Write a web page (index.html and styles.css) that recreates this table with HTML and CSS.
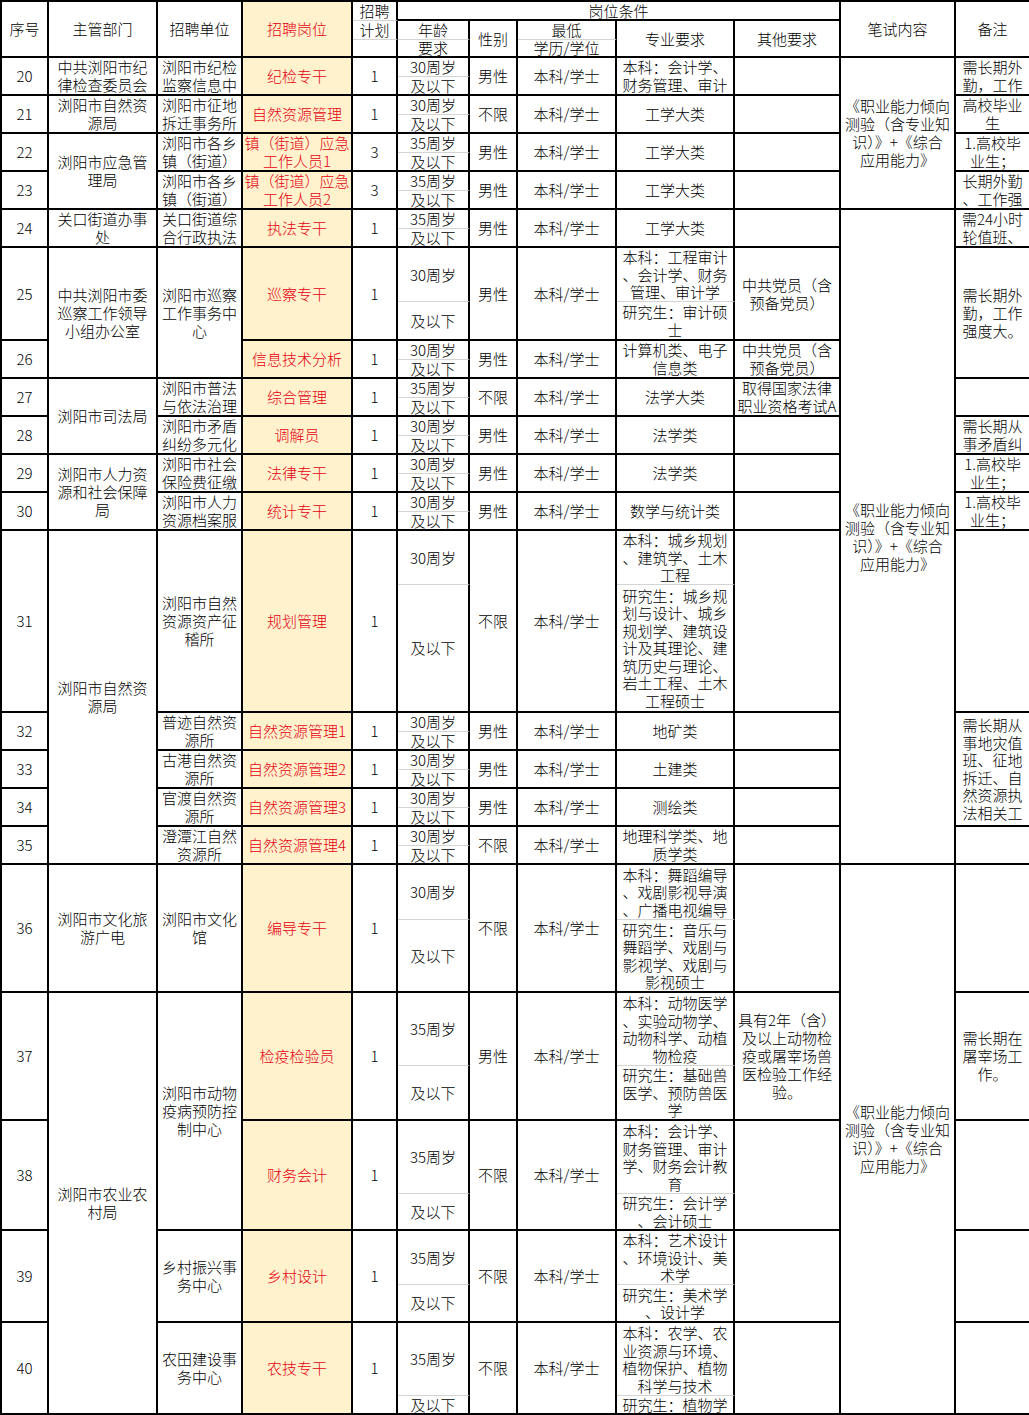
FILE: index.html
```html
<!DOCTYPE html>
<html lang="zh-CN">
<head>
<meta charset="utf-8">
<title>招聘岗位表</title>
<link rel="stylesheet" href="styles.css">
</head>
<body>
<table class="sheet">
<colgroup>
<col class="w-no"><col class="w-dept"><col class="w-unit"><col class="w-post"><col class="w-plan"><col class="w-age"><col class="w-sex"><col class="w-edu"><col class="w-major"><col class="w-other"><col class="w-exam"><col class="w-note">
</colgroup>
<thead>
<tr class="hA">
<th rowspan="3">序号</th>
<th rowspan="3">主管部门</th>
<th rowspan="3">招聘单位</th>
<th rowspan="3" class="post">招聘岗位</th>
<th class="up">招聘</th>
<th colspan="5">岗位条件</th>
<th rowspan="3">笔试内容</th>
<th rowspan="3" class="last">备注</th>
</tr>
<tr class="hB">
<th class="up">计划</th>
<th class="up">年龄</th>
<th rowspan="2">性别</th>
<th class="up">最低</th>
<th rowspan="2">专业要求</th>
<th rowspan="2">其他要求</th>
</tr>
<tr class="hC">
<th></th>
<th>要求</th>
<th>学历/学位</th>
</tr>
</thead>
<tbody>
<!-- 20 -->
<tr class="h19">
<td rowspan="2">20</td>
<td rowspan="2">中共浏阳市纪<br>律检查委员会</td>
<td rowspan="2">浏阳市纪检<br>监察信息中</td>
<td rowspan="2" class="post">纪检专干</td>
<td rowspan="2">1</td>
<td class="age up">30周岁</td>
<td rowspan="2">男性</td>
<td rowspan="2">本科/学士</td>
<td rowspan="2">本科：会计学、<br>财务管理、审计</td>
<td rowspan="2"></td>
<td rowspan="8">《职业能力倾向<br>测验（含专业知<br>识）》+《综合<br>应用能力》</td>
<td rowspan="2" class="last">需长期外<br>勤，工作</td>
</tr>
<tr class="h19"><td class="age">及以下</td></tr>
<!-- 21 -->
<tr class="h19">
<td rowspan="2">21</td>
<td rowspan="2">浏阳市自然资<br>源局</td>
<td rowspan="2">浏阳市征地<br>拆迁事务所</td>
<td rowspan="2" class="post">自然资源管理</td>
<td rowspan="2">1</td>
<td class="age up">30周岁</td>
<td rowspan="2">不限</td>
<td rowspan="2">本科/学士</td>
<td rowspan="2">工学大类</td>
<td rowspan="2"></td>
<td rowspan="2" class="last">高校毕业<br>生</td>
</tr>
<tr class="h19"><td class="age">及以下</td></tr>
<!-- 22 -->
<tr class="h19">
<td rowspan="2">22</td>
<td rowspan="4">浏阳市应急管<br>理局</td>
<td rowspan="2">浏阳市各乡<br>镇（街道）</td>
<td rowspan="2" class="post">镇（街道）应急<br>工作人员1</td>
<td rowspan="2">3</td>
<td class="age up">35周岁</td>
<td rowspan="2">男性</td>
<td rowspan="2">本科/学士</td>
<td rowspan="2">工学大类</td>
<td rowspan="2"></td>
<td rowspan="2" class="last">1.高校毕<br>业生；</td>
</tr>
<tr class="h19"><td class="age">及以下</td></tr>
<!-- 23 -->
<tr class="h19">
<td rowspan="2">23</td>
<td rowspan="2">浏阳市各乡<br>镇（街道）</td>
<td rowspan="2" class="post">镇（街道）应急<br>工作人员2</td>
<td rowspan="2">3</td>
<td class="age up">35周岁</td>
<td rowspan="2">男性</td>
<td rowspan="2">本科/学士</td>
<td rowspan="2">工学大类</td>
<td rowspan="2"></td>
<td rowspan="2" class="last">长期外勤<br>、工作强</td>
</tr>
<tr class="h19"><td class="age">及以下</td></tr>
<!-- 24 -->
<tr class="h19">
<td rowspan="2">24</td>
<td rowspan="2">关口街道办事<br>处</td>
<td rowspan="2">关口街道综<br>合行政执法</td>
<td rowspan="2" class="post">执法专干</td>
<td rowspan="2">1</td>
<td class="age up">35周岁</td>
<td rowspan="2">男性</td>
<td rowspan="2">本科/学士</td>
<td rowspan="2">工学大类</td>
<td rowspan="2"></td>
<td rowspan="24">《职业能力倾向<br>测验（含专业知<br>识）》+《综合<br>应用能力》</td>
<td rowspan="2" class="last">需24小时<br>轮值班、</td>
</tr>
<tr class="h19"><td class="age">及以下</td></tr>
<!-- 25 -->
<tr class="h54">
<td rowspan="2">25</td>
<td rowspan="4">中共浏阳市委<br>巡察工作领导<br>小组办公室</td>
<td rowspan="4">浏阳市巡察<br>工作事务中<br>心</td>
<td rowspan="2" class="post">巡察专干</td>
<td rowspan="2">1</td>
<td class="age up">30周岁</td>
<td rowspan="2">男性</td>
<td rowspan="2">本科/学士</td>
<td class="sub up">本科：工程审计<br>、会计学、财务<br>管理、审计学</td>
<td rowspan="2">中共党员（含<br>预备党员）</td>
<td rowspan="4" class="last">需长期外<br>勤，工作<br>强度大。</td>
</tr>
<tr class="h39"><td class="age">及以下</td><td class="sub">研究生：审计硕<br>士</td></tr>
<!-- 26 -->
<tr class="h19">
<td rowspan="2">26</td>
<td rowspan="2" class="post">信息技术分析</td>
<td rowspan="2">1</td>
<td class="age up">30周岁</td>
<td rowspan="2">男性</td>
<td rowspan="2">本科/学士</td>
<td rowspan="2">计算机类、电子<br>信息类</td>
<td rowspan="2">中共党员（含<br>预备党员）</td>
</tr>
<tr class="h19"><td class="age">及以下</td></tr>
<!-- 27 -->
<tr class="h19">
<td rowspan="2">27</td>
<td rowspan="4">浏阳市司法局</td>
<td rowspan="2">浏阳市普法<br>与依法治理</td>
<td rowspan="2" class="post">综合管理</td>
<td rowspan="2">1</td>
<td class="age up">35周岁</td>
<td rowspan="2">不限</td>
<td rowspan="2">本科/学士</td>
<td rowspan="2">法学大类</td>
<td rowspan="2">取得国家法律<br>职业资格考试A</td>
<td rowspan="2" class="last"></td>
</tr>
<tr class="h19"><td class="age">及以下</td></tr>
<!-- 28 -->
<tr class="h19">
<td rowspan="2">28</td>
<td rowspan="2">浏阳市矛盾<br>纠纷多元化</td>
<td rowspan="2" class="post">调解员</td>
<td rowspan="2">1</td>
<td class="age up">30周岁</td>
<td rowspan="2">男性</td>
<td rowspan="2">本科/学士</td>
<td rowspan="2">法学类</td>
<td rowspan="2"></td>
<td rowspan="2" class="last">需长期从<br>事矛盾纠</td>
</tr>
<tr class="h19"><td class="age">及以下</td></tr>
<!-- 29 -->
<tr class="h19">
<td rowspan="2">29</td>
<td rowspan="4">浏阳市人力资<br>源和社会保障<br>局</td>
<td rowspan="2">浏阳市社会<br>保险费征缴</td>
<td rowspan="2" class="post">法律专干</td>
<td rowspan="2">1</td>
<td class="age up">30周岁</td>
<td rowspan="2">男性</td>
<td rowspan="2">本科/学士</td>
<td rowspan="2">法学类</td>
<td rowspan="2"></td>
<td rowspan="2" class="last">1.高校毕<br>业生；</td>
</tr>
<tr class="h19"><td class="age">及以下</td></tr>
<!-- 30 -->
<tr class="h19">
<td rowspan="2">30</td>
<td rowspan="2">浏阳市人力<br>资源档案服</td>
<td rowspan="2" class="post">统计专干</td>
<td rowspan="2">1</td>
<td class="age up">30周岁</td>
<td rowspan="2">男性</td>
<td rowspan="2">本科/学士</td>
<td rowspan="2">数学与统计类</td>
<td rowspan="2"></td>
<td rowspan="2" class="last">1.高校毕<br>业生；</td>
</tr>
<tr class="h19"><td class="age">及以下</td></tr>
<!-- 31 -->
<tr class="h54">
<td rowspan="2">31</td>
<td rowspan="10">浏阳市自然资<br>源局</td>
<td rowspan="2">浏阳市自然<br>资源资产征<br>稽所</td>
<td rowspan="2" class="post">规划管理</td>
<td rowspan="2">1</td>
<td class="age up">30周岁</td>
<td rowspan="2">不限</td>
<td rowspan="2">本科/学士</td>
<td class="sub up">本科：城乡规划<br>、建筑学、土木<br>工程</td>
<td rowspan="2"></td>
<td rowspan="2" class="last"></td>
</tr>
<tr class="h128"><td class="age">及以下</td><td class="sub">研究生：城乡规<br>划与设计、城乡<br>规划学、建筑设<br>计及其理论、建<br>筑历史与理论、<br>岩土工程、土木<br>工程硕士</td></tr>
<!-- 32 -->
<tr class="h19">
<td rowspan="2">32</td>
<td rowspan="2">普迹自然资<br>源所</td>
<td rowspan="2" class="post">自然资源管理1</td>
<td rowspan="2">1</td>
<td class="age up">30周岁</td>
<td rowspan="2">男性</td>
<td rowspan="2">本科/学士</td>
<td rowspan="2">地矿类</td>
<td rowspan="2"></td>
<td rowspan="6" class="last top">需长期从<br>事地灾值<br>班、征地<br>拆迁、自<br>然资源执<br>法相关工</td>
</tr>
<tr class="h19"><td class="age">及以下</td></tr>
<!-- 33 -->
<tr class="h19">
<td rowspan="2">33</td>
<td rowspan="2">古港自然资<br>源所</td>
<td rowspan="2" class="post">自然资源管理2</td>
<td rowspan="2">1</td>
<td class="age up">30周岁</td>
<td rowspan="2">男性</td>
<td rowspan="2">本科/学士</td>
<td rowspan="2">土建类</td>
<td rowspan="2"></td>
</tr>
<tr class="h19"><td class="age">及以下</td></tr>
<!-- 34 -->
<tr class="h19">
<td rowspan="2">34</td>
<td rowspan="2">官渡自然资<br>源所</td>
<td rowspan="2" class="post">自然资源管理3</td>
<td rowspan="2">1</td>
<td class="age up">30周岁</td>
<td rowspan="2">男性</td>
<td rowspan="2">本科/学士</td>
<td rowspan="2">测绘类</td>
<td rowspan="2"></td>
</tr>
<tr class="h19"><td class="age">及以下</td></tr>
<!-- 35 -->
<tr class="h19">
<td rowspan="2">35</td>
<td rowspan="2">澄潭江自然<br>资源所</td>
<td rowspan="2" class="post">自然资源管理4</td>
<td rowspan="2">1</td>
<td class="age up">30周岁</td>
<td rowspan="2">不限</td>
<td rowspan="2">本科/学士</td>
<td rowspan="2">地理科学类、地<br>质学类</td>
<td rowspan="2"></td>
<td rowspan="2" class="last"></td>
</tr>
<tr class="h19"><td class="age">及以下</td></tr>
<!-- 36 -->
<tr class="h55">
<td rowspan="2">36</td>
<td rowspan="2">浏阳市文化旅<br>游广电</td>
<td rowspan="2">浏阳市文化<br>馆</td>
<td rowspan="2" class="post">编导专干</td>
<td rowspan="2">1</td>
<td class="age up">30周岁</td>
<td rowspan="2">不限</td>
<td rowspan="2">本科/学士</td>
<td class="sub up">本科：舞蹈编导<br>、戏剧影视导演<br>、广播电视编导</td>
<td rowspan="2"></td>
<td rowspan="10">《职业能力倾向<br>测验（含专业知<br>识）》+《综合<br>应用能力》</td>
<td rowspan="2" class="last"></td>
</tr>
<tr class="h73"><td class="age">及以下</td><td class="sub">研究生：音乐与<br>舞蹈学、戏剧与<br>影视学、戏剧与<br>影视硕士</td></tr>
<!-- 37 -->
<tr class="h73">
<td rowspan="2">37</td>
<td rowspan="8">浏阳市农业农<br>村局</td>
<td rowspan="4">浏阳市动物<br>疫病预防控<br>制中心</td>
<td rowspan="2" class="post">检疫检验员</td>
<td rowspan="2">1</td>
<td class="age up">35周岁</td>
<td rowspan="2">男性</td>
<td rowspan="2">本科/学士</td>
<td class="sub up">本科：动物医学<br>、实验动物学、<br>动物科学、动植<br>物检疫</td>
<td rowspan="2">具有2年（含）<br>及以上动物检<br>疫或屠宰场兽<br>医检验工作经<br>验。</td>
<td rowspan="2" class="last">需长期在<br>屠宰场工<br>作。</td>
</tr>
<tr class="h55"><td class="age">及以下</td><td class="sub">研究生：基础兽<br>医学、预防兽医<br>学</td></tr>
<!-- 38 -->
<tr class="h73">
<td rowspan="2">38</td>
<td rowspan="2" class="post">财务会计</td>
<td rowspan="2">1</td>
<td class="age up">35周岁</td>
<td rowspan="2">不限</td>
<td rowspan="2">本科/学士</td>
<td class="sub up">本科：会计学、<br>财务管理、审计<br>学、财务会计教<br>育</td>
<td rowspan="2"></td>
<td rowspan="2" class="last"></td>
</tr>
<tr class="h37"><td class="age">及以下</td><td class="sub">研究生：会计学<br>、会计硕士</td></tr>
<!-- 39 -->
<tr class="h54">
<td rowspan="2">39</td>
<td rowspan="2">乡村振兴事<br>务中心</td>
<td rowspan="2" class="post">乡村设计</td>
<td rowspan="2">1</td>
<td class="age up">35周岁</td>
<td rowspan="2">不限</td>
<td rowspan="2">本科/学士</td>
<td class="sub up">本科：艺术设计<br>、环境设计、美<br>术学</td>
<td rowspan="2"></td>
<td rowspan="2" class="last"></td>
</tr>
<tr class="h38"><td class="age">及以下</td><td class="sub">研究生：美术学<br>、设计学</td></tr>
<!-- 40 -->
<tr class="h73">
<td rowspan="2">40</td>
<td rowspan="2">农田建设事<br>务中心</td>
<td rowspan="2" class="post">农技专干</td>
<td rowspan="2">1</td>
<td class="age up">35周岁</td>
<td rowspan="2">不限</td>
<td rowspan="2">本科/学士</td>
<td class="sub up">本科：农学、农<br>业资源与环境、<br>植物保护、植物<br>科学与技术</td>
<td rowspan="2"></td>
<td rowspan="2" class="last"></td>
</tr>
<tr class="h19"><td class="age tiny">及以下</td><td class="sub tiny">研究生：植物学</td></tr>
</tbody>
</table>
</body>
</html>
```

FILE: styles.css
```css
html, body {
  margin: 0;
  padding: 0;
  background: #ffffff;
  overflow: hidden;
}

body {
  width: 1029px;
  font-family: "Noto Sans CJK SC", "Noto Sans", sans-serif;
  font-size: 15px;
  font-weight: 300;
  color: #000000;
}

.sheet {
  border-collapse: separate;
  border-spacing: 0;
  table-layout: fixed;
  width: 1029px;
  border-left: 2px solid #000;
  border-top: 2px solid #000;
}

.w-no { width: 47px; }
.w-dept { width: 109px; }
.w-unit { width: 85px; }
.w-post { width: 110px; }
.w-plan { width: 45px; }
.w-age { width: 72px; }
.w-sex { width: 48px; }
.w-edu { width: 99px; }
.w-major { width: 118px; }
.w-other { width: 106px; }
.w-exam { width: 115px; }
.w-note { width: 73px; }

.sheet td,
.sheet th {
  box-sizing: border-box;
  padding: 0;
  border-right: 2px solid #000;
  border-bottom: 2px solid #000;
  text-align: center;
  vertical-align: middle;
  white-space: nowrap;
  line-height: 18px;
  font-weight: 300;
}

.sheet th {
  line-height: 16px;
}

.sheet .up {
  border-bottom: 1px solid #d4d4d4;
}

.sheet .last {
  border-right: none;
  overflow: hidden;
}

.sheet .post {
  background: #fff2cc;
  color: #e60012;
}

.sheet .age {
  line-height: 16px;
}

.sheet .sub {
  line-height: 17.5px;
}

.sheet .tiny {
  line-height: 15px;
}

.sheet .top {
  vertical-align: top;
  padding-top: 3px;
  line-height: 17.5px;
}

.hA { height: 19px; }
.hB { height: 19px; }
.hC { height: 18px; }
.h19 { height: 19px; }
.h37 { height: 37px; }
.h38 { height: 38px; }
.h39 { height: 39px; }
.h54 { height: 54px; }
.h55 { height: 55px; }
.h73 { height: 73px; }
.h128 { height: 128px; }
```
